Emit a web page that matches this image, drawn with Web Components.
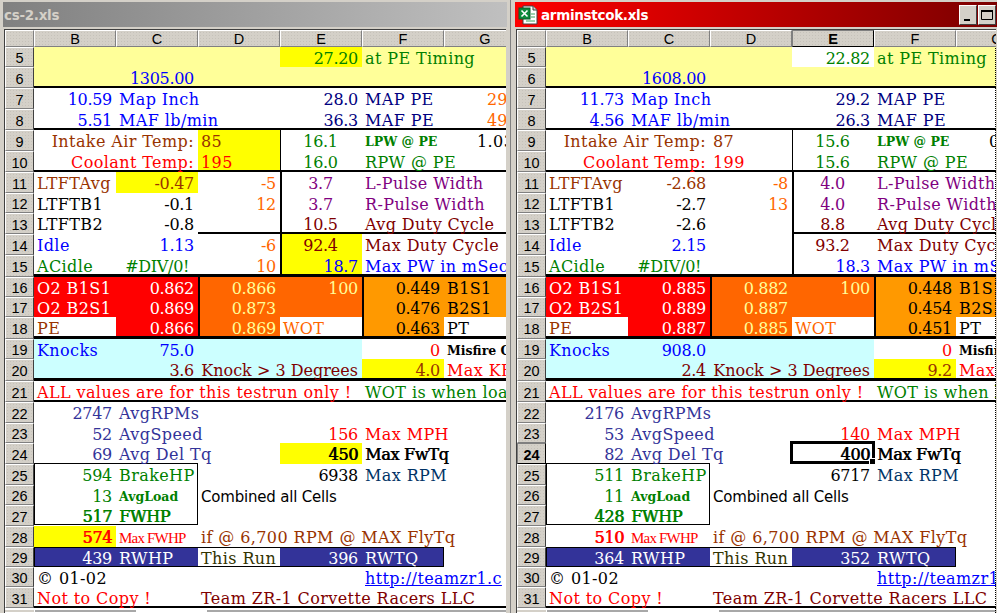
<!DOCTYPE html>
<html>
<head>
<meta charset="utf-8">
<title>Workbooks</title>
<style>
    html, body { margin: 0; padding: 0; background: #d4d0c8; }
</style>
</head>
<body>
<xl-desktop>
    <xl-window caption="cs-2.xls">
        <xl-sheet id="left"></xl-sheet>
    </xl-window>
    <xl-window caption="arminstcok.xls" active>
        <xl-sheet id="right" active-col="E" active-row="24" edge></xl-sheet>
    </xl-window>
</xl-desktop>

<script>
class XlDesktop extends HTMLElement {
    constructor() {
        super();
        this.attachShadow({ mode: 'open' });
        this.shadowRoot.innerHTML = `
            <style>
                :host { display: flex; width: 997px; height: 613px; overflow: hidden; background: #d4d0c8; }
            </style>
            <slot></slot>
        `;
    }
}

class XlWindow extends HTMLElement {
    constructor() {
        super();
        this.attachShadow({ mode: 'open' });
    }

    connectedCallback() {
        const active = this.hasAttribute('active');
        this.shadowRoot.innerHTML = `
            <style>
                :host { display: flex; flex-direction: column; box-sizing: border-box; height: 613px; padding: 2px 3px 0 3px; width: 511px; flex: none; border-right: 1px solid #808080; overflow: hidden; }
                :host([active]) { width: 486px; padding: 2px 0 0 4px; border-right: 0; }
                .title { display: flex; align-items: center; height: 25px; flex: none; padding-left: 1px; background: linear-gradient(90deg, #808080, #c0c0c0); color: #d4d0c8; font: bold 13.5px "DejaVu Sans", sans-serif; letter-spacing: -0.3px; }
                :host([active]) .title { padding-left: 3px; background: linear-gradient(90deg, #ff0000, #7b0000); color: #fff; }
                .name { flex: 1; }
                svg { display: block; margin-right: 3px; }
                .btn { width: 18px; height: 20px; box-sizing: border-box; background: #d4d0c8; border: 1px solid; border-color: #fff #404040 #404040 #fff; margin-right: 1px; }
                ::slotted(*) { margin: 2px 1px 0 1px; flex: 1; min-height: 0; }
            </style>
            <div class="title">
                ${active ? `
                <svg width="20" height="20" viewBox="0 0 20 20">
                    <path d="M5 1h10l4 4v14H5z" fill="#fff" stroke="#404040"/>
                    <path d="M15 1v4h4" fill="#d4d0c8" stroke="#404040"/>
                    <rect x="1" y="3" width="11" height="11" fill="#0b8a3a" stroke="#0a5a28"/>
                    <path d="M3.5 5.5l6 6M9.5 5.5l-6 6" stroke="#fff" stroke-width="1.6"/>
                    <path d="M13 9h4M13 12h4M8 16h9" stroke="#3aa05a"/>
                </svg>` : ''}
                <span class="name">${this.getAttribute('caption')}</span>
                ${active ? `
                <div class="btn"><svg width="16" height="18" viewBox="0 0 16 18"><path d="M4 13h6v2H4z" fill="#000"/></svg></div>
                <div class="btn"><svg width="16" height="18" viewBox="0 0 16 18"><path d="M2.5 4.5h11v9h-11z" fill="none" stroke="#000"/><path d="M2 4h12v2H2z" fill="#000"/></svg></div>` : ''}
            </div>
            <slot></slot>
        `;
    }
}

class XlSheet extends HTMLElement {
    constructor() {
        super();
        this.attachShadow({ mode: 'open' });
        this.rowHeights = [20, 21, 21, 21, 21, 21, 21, 20, 21, 21, 22, 20, 20, 22, 20, 22, 21, 21, 20, 21, 21, 20, 21, 21, 20, 20, 21];
    }

    connectedCallback() {
        const activeCol = this.getAttribute('active-col');
        const activeRow = Number(this.getAttribute('active-row'));
        const cols = ['B', 'C', 'D', 'E', 'F', 'G', 'H'].map(name =>
            `<div class="head col ${name === activeCol ? 'on' : ''}">${name === 'H' ? '' : name}</div>`).join('');
        const rows = this.rowHeights.map((h, i) =>
            `<div class="head row ${i + 5 === activeRow ? 'on' : ''}" style="grid-row:${i + 2};grid-column:1">${i + 5}</div>`).join('');
        this.shadowRoot.innerHTML = `
            <style>
                :host { display: block; position: relative; overflow: hidden; background: #fff; border-left: 1px solid #404040; border-top: 1px solid #404040; }
                .grid { display: grid; grid-template-columns: 29px repeat(7, 82px); grid-template-rows: 17px ${this.rowHeights.map(h => h + 'px').join(' ')}; font: 16px/20px "DejaVu Serif", serif; }
                .head { box-sizing: border-box; display: flex; align-items: center; justify-content: center; background: #d4d0c8 radial-gradient(#c6c2ba 0.6px, transparent 0.8px) 0 0 / 3px 3px; color: #000; font: 14.5px "Liberation Sans", sans-serif; border: 1px solid; border-color: #fff #808080 #808080 #fff; }
                .row { border-right-color: #404040; padding-top: 2px; }
                .on { font-weight: bold; border-color: #808080 #000 #000 #808080; }
                .scroll { display: flex; margin-top: 2px; height: 2px; background: #fff; }
                .scroll div { background: #a8a8a8; }
                :host([edge])::after { content: ""; position: absolute; right: 0; top: 18px; bottom: 0; border-right: 1px dotted #000; }
            </style>
            <div class="grid">
                <div class="head corner"></div>
                ${cols}
                ${rows}
                <slot></slot>
            </div>
            <div class="scroll">
                <div style="width:29px;background:#d4d0c8"></div>
                <div style="width:101px;margin-left:1px"></div>
                <div style="flex:1;margin-left:71px"></div>
            </div>
        `;
    }
}

// parse "E5" or "B5:C6" into grid lines, column B is grid column 2 and row 5 is grid row 2
function gridArea(at) {
    const [a, b] = at.split(':');
    const end = b || a;
    const col = s => s.charCodeAt(0) - 64;
    const row = s => Number(s.slice(1)) - 3;
    return `${row(a)} / ${col(a)} / ${row(end) + 1} / ${col(end) + 1}`;
}

class XlCell extends HTMLElement {
    constructor() {
        super();
        this.attachShadow({ mode: 'open' });
        this.shadowRoot.innerHTML = `
            <style>
                :host { display: flex; box-sizing: border-box; min-width: 0; white-space: nowrap; padding: 2px 4px 0 3px; justify-content: flex-start; align-items: flex-start; letter-spacing: 0.4px; }
                :host([align="r"]) { justify-content: flex-end; letter-spacing: -0.3px; }
                :host([align="c"]) { justify-content: center; letter-spacing: -0.3px; }
                :host([kind="label"]) { letter-spacing: 0.4px; }
                :host([kind="tight"]) { letter-spacing: 0; }
                :host([kind="small"]) { font: bold 12.5px/20px "DejaVu Serif", serif; letter-spacing: 0; }
                :host([kind="narrow"]) { font: 15px/20px "Liberation Serif", serif; letter-spacing: -0.8px; }
                :host([kind="sans"]) { font: 15px/20px "DejaVu Sans", sans-serif; letter-spacing: -0.2px; }
                :host([kind="bold"]) { text-shadow: 0.6px 0 0 currentColor; letter-spacing: -0.3px; }
                :host([kind="link"]) { text-decoration: underline; }
            </style>
            <div><slot></slot></div>
        `;
    }

    connectedCallback() {
        this.style.gridArea = gridArea(this.getAttribute('at'));
        if (this.hasAttribute('fg')) this.style.color = this.getAttribute('fg');
    }
}

class XlFill extends HTMLElement {
    constructor() {
        super();
        this.attachShadow({ mode: 'open' });
        this.shadowRoot.innerHTML = `<style>:host { display: block; }</style>`;
    }

    connectedCallback() {
        this.style.gridArea = gridArea(this.getAttribute('at'));
        this.style.background = this.getAttribute('bg');
    }
}

class XlLine extends HTMLElement {
    constructor() {
        super();
        this.attachShadow({ mode: 'open' });
        this.shadowRoot.innerHTML = `
            <style>
                :host { display: block; background: #000; }
                :host([side="bottom"]) { align-self: end; height: var(--w, 2px); }
                :host([side="left"]) { justify-self: start; width: var(--w, 2px); }
            </style>
        `;
    }

    connectedCallback() {
        this.style.gridArea = gridArea(this.getAttribute('at'));
        if (this.hasAttribute('w')) this.style.setProperty('--w', this.getAttribute('w') + 'px');
    }
}

class XlBox extends HTMLElement {
    constructor() {
        super();
        this.attachShadow({ mode: 'open' });
        this.shadowRoot.innerHTML = `
            <style>
                :host { display: block; box-sizing: border-box; border: 1px solid #000; }
            </style>
        `;
    }

    connectedCallback() {
        this.style.gridArea = gridArea(this.getAttribute('at'));
    }
}

class XlSelection extends HTMLElement {
    constructor() {
        super();
        this.attachShadow({ mode: 'open' });
        this.shadowRoot.innerHTML = `
            <style>
                :host { display: block; position: relative; box-sizing: border-box; border: 3px solid #000; margin: -2px -1px 0 -2px; }
                .handle { position: absolute; right: -4px; bottom: -4px; width: 5px; height: 5px; background: #000; border: 1px solid #fff; }
            </style>
            <div class="handle"></div>
        `;
    }

    connectedCallback() {
        this.style.gridArea = gridArea(this.getAttribute('at'));
    }
}

customElements.define('xl-desktop', XlDesktop);
customElements.define('xl-window', XlWindow);
customElements.define('xl-sheet', XlSheet);
customElements.define('xl-cell', XlCell);
customElements.define('xl-fill', XlFill);
customElements.define('xl-line', XlLine);
customElements.define('xl-box', XlBox);
customElements.define('xl-selection', XlSelection);

const BLUE = '#0000ff', NAVY = '#000080', GREEN = '#008000', BROWN = '#993300', MAROON = '#800000',
    RED = '#ff0000', ORANGE = '#ff6600', PURPLE = '#800080', INDIGO = '#333399', PALE = '#ffff99', TEAL = '#003366';

function cell(at, text, fg, align, kind) {
    return `<xl-cell at="${at}" fg="${fg || '#000'}"${align ? ` align="${align}"` : ''}${kind ? ` kind="${kind}"` : ''}>${text}</xl-cell>`;
}

function sheetCells(v) {
    const fill = (at, bg) => `<xl-fill at="${at}" bg="${bg}"></xl-fill>`;
    const bar = (at, w) => `<xl-line at="${at}" side="bottom"${w ? ` w="${w}"` : ''}></xl-line>`;
    const post = (at, w) => `<xl-line at="${at}" side="left"${w ? ` w="${w}"` : ''}></xl-line>`;
    return [
        // backgrounds
        fill('B5:H6', '#ffff99'),
        fill('E5', v.e5Fill),
        v.d9Fill ? fill('D9:D10', '#ffff00') : '',
        v.c11Fill ? fill('C11', '#ffff00') : '',
        v.e14Fill ? fill('E14:E15', '#ffff00') : '',
        fill('B16:C18', RED),
        fill('B18', '#fff'),
        fill('D16:E18', ORANGE),
        fill('E18', '#fff'),
        fill('F16:H18', '#ff9900'),
        fill('G18:H18', '#fff'),
        fill('B19:E20', '#ccffff'),
        fill('F20', '#ffff00'),
        v.e24Fill ? fill('E24', '#ffff00') : '',
        v.b28Fill ? fill('B28', '#ffff00') : '',
        fill('B29:F29', INDIGO),
        fill('D29', '#fff'),

        // lines
        bar('B6:H6'), bar('B8:H8'), bar('B10:H10'),
        bar(v.rule13 + '13:H13'), bar('B15:H15', 3), bar('B18:H18', 3), bar('B20:H20', 3), bar('B21:H21'),
        post('E9:E10', 1), post('E11:E15', 2),
        post('D16:D18', 2), post('F16:F18', 2),
        '<xl-box at="B25:C27" style="margin:-1px 0 1px 0"></xl-box>',
        '<xl-box at="B29:F29"></xl-box>',
        bar('B31:H31'),
        v.select ? `<xl-selection at="${v.select}"></xl-selection>` : '',

        // rows 5 to 8
        cell('E5', v.e5, GREEN, 'r'), cell('F5:H5', 'at PE Timing', GREEN),
        cell('C6', v.c6, BLUE, 'r'),
        cell('B7', v.b7, BLUE, 'r'), cell('C7:D7', 'Map Inch', BLUE), cell('E7', v.e7, NAVY, 'r'), cell('F7', 'MAP PE', NAVY),
        cell('B8', v.b8, BLUE, 'r'), cell('C8:D8', 'MAF lb/min', BLUE), cell('E8', v.e8, NAVY, 'r'), cell('F8', 'MAF PE', NAVY),
        v.g7 ? cell('G7', `<span style="margin-left:40px">${v.g7}</span>`, ORANGE, '', 'tight') : '',
        v.g8 ? cell('G8', `<span style="margin-left:40px">${v.g8}</span>`, ORANGE, '', 'tight') : '',

        // rows 9 to 15
        cell('B9:C9', 'Intake Air Temp:', BROWN, 'r', 'label'), cell('D9', v.d9, BROWN), cell('E9', v.e9, GREEN, 'c'),
        cell('F9', 'LPW @ PE', GREEN, '', 'small'), cell('G9:H9', `<span style="margin-left:30px">${v.g9}</span>`, '#000'),
        cell('B10:C10', 'Coolant Temp:', RED, 'r', 'label'), cell('D10', v.d10, RED), cell('E10', v.e10, GREEN, 'c'), cell('F10:G10', 'RPW @ PE', GREEN),
        cell('B11', 'LTFTAvg', BROWN), cell('C11', v.c11, BROWN, 'r'), cell('D11', v.d11, ORANGE, 'r'), cell('E11', v.e11, PURPLE, 'c'), cell('F11:H11', 'L-Pulse Width', PURPLE),
        cell('B12', 'LTFTB1'), cell('C12', v.c12, '#000', 'r'), cell('D12', v.d12, ORANGE, 'r'), cell('E12', v.e12, PURPLE, 'c'), cell('F12:H12', 'R-Pulse Width', PURPLE),
        cell('B13', 'LTFTB2'), cell('C13', v.c13, '#000', 'r'), cell('E13', v.e13, MAROON, 'c'), cell('F13:H13', 'Avg Duty Cycle', MAROON),
        cell('B14', 'Idle', BLUE), cell('C14', v.c14, BLUE, 'r'), v.d14 ? cell('D14', v.d14, ORANGE, 'r') : '', cell('E14', v.e14, MAROON, 'c'), cell('F14:H14', 'Max Duty Cycle', MAROON),
        cell('B15', 'ACidle', GREEN), cell('C15', '#DIV/0!&nbsp;', GREEN, 'r'), v.d15 ? cell('D15', v.d15, ORANGE, 'r') : '', cell('E15', v.e15, BLUE, 'r'), cell('F15:H15', 'Max PW in mSec', BLUE),

        // rows 16 to 18
        cell('B16', 'O2 B1S1', '#fff'), cell('C16', v.o2[0], '#fff', 'r'), cell('D16', v.mid[0], PALE, 'r'), cell('E16', '100', PALE, 'r'), cell('F16', v.pt[0], '#000', 'r'), cell('G16:H16', 'B1S1'),
        cell('B17', 'O2 B2S1', '#fff'), cell('C17', v.o2[1], '#fff', 'r'), cell('D17', v.mid[1], PALE, 'r'), cell('F17', v.pt[1], '#000', 'r'), cell('G17:H17', 'B2S1'),
        cell('B18', 'PE', BROWN), cell('C18', v.o2[2], '#fff', 'r'), cell('D18', v.mid[2], PALE, 'r'), cell('E18', 'WOT', ORANGE), cell('F18', v.pt[2], '#000', 'r'), cell('G18:H18', 'PT'),

        // rows 19 to 21
        cell('B19', 'Knocks', BLUE), cell('C19', v.c19, BLUE, 'r'), cell('F19', '0', RED, 'r'), cell('G19:H19', 'Misfire C', '#000', '', 'small'),
        cell('C20', v.c20, MAROON, 'r'), cell('D20:E20', 'Knock &gt; 3 Degrees', MAROON, 'r', 'tight'), cell('F20', v.f20, BROWN, 'r'), cell('G20:H20', 'Max KR', RED),
        cell('B21:E21', 'ALL values are for this testrun only !', RED), cell('F21:H21', 'WOT is when load', GREEN),

        // rows 22 to 27
        cell('B22', v.b22, INDIGO, 'r'), cell('C22:D22', 'AvgRPMs', INDIGO),
        cell('B23', v.b23, INDIGO, 'r'), cell('C23:D23', 'AvgSpeed', INDIGO), cell('E23', v.e23, RED, 'r'), cell('F23:G23', 'Max MPH', RED),
        cell('B24', v.b24, INDIGO, 'r'), cell('C24:D24', 'Avg Del Tq', INDIGO), cell('E24', v.e24, '#000', 'r', 'bold'), cell('F24:G24', 'Max FwTq', '#000', '', 'bold'),
        cell('B25', v.b25, GREEN, 'r'), cell('C25', 'BrakeHP', GREEN), cell('E25', v.e25, '#000', 'r'), cell('F25:G25', 'Max RPM', TEAL),
        cell('B26', v.b26, GREEN, 'r'), cell('C26', 'AvgLoad', GREEN, '', 'small'), cell('D26:F26', 'Combined all Cells', '#000', '', 'sans'),
        cell('B27', v.b27, GREEN, 'r', 'bold'), cell('C27', 'FWHP', GREEN, '', 'bold'),

        // rows 28 to 31
        cell('B28', v.b28, RED, 'r', 'bold'), cell('C28', 'Max FWHP', RED, '', 'narrow'), cell('D28:G28', 'if @ 6,700 RPM @ MAX FlyTq', BROWN),
        cell('B29', v.b29, '#fff', 'r'), cell('C29', 'RWHP', '#fff'), cell('D29', 'This Run', '#333300'), cell('E29', v.e29, '#fff', 'r'), cell('F29', 'RWTQ', '#fff'),
        cell('B30:C30', '© 01-02'), cell('F30:H30', v.link, BLUE, '', 'link'),
        cell('B31:C31', 'Not to Copy !', RED), cell('D31:G31', 'Team ZR-1 Corvette Racers LLC', MAROON)
    ].join('');
}

document.getElementById('left').innerHTML = sheetCells({
    e5Fill: '#ffff00', d9Fill: true, c11Fill: true, e14Fill: true, e24Fill: true, b28Fill: true, rule13: 'D', link: 'http://teamzr1.c',
    e5: '27.20', c6: '1305.00', b7: '10.59', e7: '28.0', g7: '29', b8: '5.51', e8: '36.3', g8: '49',
    d9: '85', e9: '16.1', g9: '1.03', d10: '195', e10: '16.0',
    c11: '-0.47', d11: '-5', e11: '3.7', c12: '-0.1', d12: '12', e12: '3.7', c13: '-0.8', e13: '10.5',
    c14: '1.13', d14: '-6', e14: '92.4', d15: '10', e15: '18.7',
    o2: ['0.862', '0.869', '0.866'], mid: ['0.866', '0.873', '0.869'], pt: ['0.449', '0.476', '0.463'],
    c19: '75.0', c20: '3.6', f20: '4.0',
    b22: '2747', b23: '52', e23: '156', b24: '69', e24: '450', b25: '594', e25: '6938', b26: '13', b27: '517', b28: '574',
    b29: '439', e29: '396'
});

document.getElementById('right').innerHTML = sheetCells({
    e5Fill: '#ffffff', rule13: 'E', select: 'E24', link: 'http://teamzr1',
    e5: '22.82', c6: '1608.00', b7: '11.73', e7: '29.2', b8: '4.56', e8: '26.3',
    d9: '87', e9: '15.6', g9: '0', d10: '199', e10: '15.6',
    c11: '-2.68', d11: '-8', e11: '4.0', c12: '-2.7', d12: '13', e12: '4.0', c13: '-2.6', e13: '8.8',
    c14: '2.15', e14: '93.2', e15: '18.3',
    o2: ['0.885', '0.889', '0.887'], mid: ['0.882', '0.887', '0.885'], pt: ['0.448', '0.454', '0.451'],
    c19: '908.0', c20: '2.4', f20: '9.2',
    b22: '2176', b23: '53', e23: '140', b24: '82', e24: '400', b25: '511', e25: '6717', b26: '11', b27: '428', b28: '510',
    b29: '364', e29: '352'
});
</script>
</body>
</html>
